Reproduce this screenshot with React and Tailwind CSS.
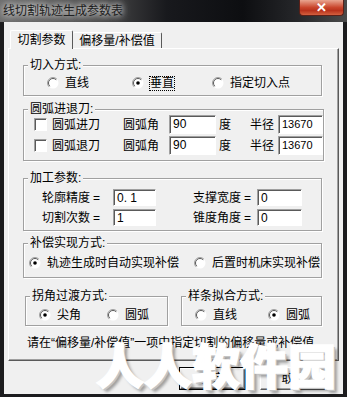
import React from 'react';

// Windows classic-style dialog: 线切割轨迹生成参数表

function Radio({ checked }) {
  return (
    <svg width="12" height="12" viewBox="0 0 12 12" className="shrink-0">
      <circle cx="6" cy="6" r="5.5" fill="#fff" />
      <path d="M9.9 2.1A5.5 5.5 0 0 0 2.1 9.9" fill="none" stroke="#a0a0a0" />
      <path d="M9.2 2.8A4.5 4.5 0 0 0 2.8 9.2" fill="none" stroke="#5a5a5a" />
      {checked && <circle cx="6" cy="6" r="1.8" fill="#000" />}
    </svg>
  );
}

function Option({ checked, label, className = '', focus = false }) {
  return (
    <div className={`flex items-center gap-[6px] h-[14px] ${className}`}>
      <Radio checked={checked} />
      <span className={focus ? 'leading-[13px] outline outline-1 outline-dotted outline-black' : 'leading-[14px]'}>{label}</span>
    </div>
  );
}

function Check() {
  return (
    <div className="w-[13px] h-[13px] shrink-0 bg-white border border-t-[#a0a0a0] border-l-[#a0a0a0] border-r-white border-b-white shadow-[inset_1px_1px_0_#5a5a5a]" />
  );
}

function Field({ value, className = '' }) {
  return (
    <div className={`shrink-0 bg-white border border-t-[#a0a0a0] border-l-[#a0a0a0] border-r-white border-b-white shadow-[inset_1px_1px_0_#5a5a5a] pl-[3px] pt-[1px] leading-[14px] ${className}`}>
      {value}
    </div>
  );
}

function Group({ title, className = '', children }) {
  return (
    <fieldset className={`border border-[#a0a0a0] shadow-[inset_1px_1px_0_#fff,1px_1px_0_#fff] ${className}`}>
      <legend className="ml-[4px] px-[2px] leading-[12px] bg-[#f0f0f0]">{title}</legend>
      {children}
    </fieldset>
  );
}

function Button({ label, primary }) {
  return (
    <div className={primary ? 'border border-black' : ''}>
      <div
        className={`flex items-center justify-center bg-[#f0f0f0] border border-t-white border-l-white border-r-[#5a5a5a] border-b-[#5a5a5a] shadow-[inset_-1px_-1px_0_#a0a0a0] ${primary ? 'w-[65px] h-[21px]' : 'w-[67px] h-[23px]'}`}
      >
        {label}
      </div>
    </div>
  );
}

export default function App() {
  return (
    <div className="relative w-[347px] h-[397px] overflow-hidden flex flex-col bg-[#1c1c1e] text-[12px] text-black font-['Liberation_Sans','Noto_Sans_CJK_SC',sans-serif]">
      {/* Title bar */}
      <div className="h-[22px] flex items-start bg-[linear-gradient(to_right,#6e6e6e_0%,#4c4c4c_28%,#18191d_48%,#0d0e11_70%,#26272a_86%,#4a4a4a_100%)]">
        <div className="pl-[3px] pt-[3px] leading-[16px] text-[#202020] [text-shadow:0_0_6px_#fff,0_0_10px_#d8d8d8]">
          线切割轨迹生成参数表
        </div>
        <div className="ml-auto mr-[3px] w-[45px] h-[16px] rounded-b-[4px] border border-t-0 border-[#5a2018] bg-[linear-gradient(to_bottom,#e9a590,#c9452c_50%,#b8321c_70%,#d2603f)] flex items-center justify-center text-white font-bold text-[13px] leading-none">
          ✕
        </div>
      </div>

      {/* Client */}
      <div className="flex-1 mx-[4px] mb-[3px] bg-[#f0f0f0] px-[4px] flex flex-col">
        {/* Tabs */}
        <div className="h-[26px] pt-[8px] flex items-end">
          <div className="relative z-10 -mb-[1px] h-[19px] w-[63px] ml-[2px] bg-[#f0f0f0] border-t border-l border-t-white border-l-white border-r border-r-[#5a5a5a] rounded-t-[2px] flex items-center justify-center leading-[14px] pb-[1px]">
            切割参数
          </div>
          <div className="h-[16px] w-[89px] bg-[#f0f0f0] border-t border-t-white border-r border-r-[#5a5a5a] rounded-t-[2px] flex items-center justify-center leading-[14px]">
            偏移量/补偿值
          </div>
        </div>

        {/* Tab page */}
        <div className="h-[313px] border border-t-white border-l-white border-r-[#5a5a5a] border-b-[#5a5a5a] shadow-[inset_-1px_-1px_0_#a0a0a0] flex flex-col">
          <Group title="切入方式:" className="mt-[10px] ml-[14px] w-[299px] pt-[5px] pb-[5px]">
            <div className="flex">
              <Option label="直线" className="ml-[23px]" />
              <Option checked focus label="垂直" className="ml-[43px]" />
              <Option label="指定切入点" className="ml-[38px]" />
            </div>
          </Group>

          <Group title="圆弧进退刀:" className="mt-[7px] ml-[14px] w-[299px] pb-[5px]">
            <div className="flex flex-col gap-[2px]">
              {['圆弧进刀', '圆弧退刀'].map((t) => (
                <div key={t} className="flex items-center h-[19px]">
                  <div className="ml-[10px]">
                    <Check />
                  </div>
                  <span className="ml-[5px] w-[48px] leading-[14px]">{t}</span>
                  <span className="ml-[23px] w-[36px] leading-[14px]">圆弧角</span>
                  <Field value="90" className="ml-[10px] w-[47px] h-[19px]" />
                  <span className="ml-[3px] w-[12px] leading-[14px]">度</span>
                  <span className="ml-[19px] w-[24px] leading-[14px]">半径</span>
                  <Field value="13670" className="ml-[4px] w-[45px] h-[19px] text-[11px]" />
                </div>
              ))}
            </div>
          </Group>

          <Group title="加工参数:" className="mt-[11px] ml-[14px] w-[299px] pt-[5px] pb-[4px]">
            <div className="flex flex-col gap-[3px]">
              {[
                ['轮廓精度', '0. 1', '支撑宽度', '0'],
                ['切割次数', '1', '锥度角度', '0'],
              ].map(([a, av, b, bv]) => (
                <div key={a} className="flex items-center h-[17px]">
                  <span className="ml-[18px] w-[48px] leading-[14px]">{a}</span>
                  <span className="ml-[3px] w-[8px] leading-[14px]">=</span>
                  <Field value={av} className="ml-[12px] w-[43px] h-[17px] pt-0" />
                  <span className="ml-[37px] w-[48px] leading-[14px]">{b}</span>
                  <span className="ml-[3px] w-[8px] leading-[14px]">=</span>
                  <Field value={bv} className="ml-[5px] w-[45px] h-[17px] pt-0" />
                </div>
              ))}
            </div>
          </Group>

          <Group title="补偿实现方式:" className="mt-[6px] ml-[14px] w-[299px] pt-[7px] pb-[7px]">
            <div className="flex">
              <Option checked label="轨迹生成时自动实现补偿" className="ml-[5px]" />
              <Option label="后置时机床实现补偿" className="ml-[15px]" />
            </div>
          </Group>

          <div className="flex mt-[12px]">
            <Group title="拐角过渡方式:" className="ml-[16px] w-[143px] pt-[6px] pb-[3px]">
              <div className="flex">
                <Option checked label="尖角" className="ml-[13px]" />
                <Option label="圆弧" className="ml-[26px]" />
              </div>
            </Group>
            <Group title="样条拟合方式:" className="ml-[13px] w-[141px] pt-[6px] pb-[3px]">
              <div className="flex">
                <Option label="直线" className="ml-[13px]" />
                <Option checked label="圆弧" className="ml-[31px]" />
              </div>
            </Group>
          </div>

          <div className="mt-[10px] ml-[18px] leading-[14px]">
            请在“偏移量/补偿值”一项中指定切割的偏移量或补偿值
          </div>
        </div>

        {/* Buttons */}
        <div className="flex mt-[6px] ml-[171px] gap-[14px]">
          <Button primary label="确定" />
          <Button label="取消" />
        </div>
      </div>

      {/* Watermark */}
      <div className="absolute left-[96px] top-[339px] text-[48px] leading-none font-black text-white [-webkit-text-stroke:1.5px_#fff] [text-shadow:2px_2px_0_#c4c4c4,4px_4px_3px_rgba(0,0,0,0.35)] font-['Noto_Sans_CJK_SC',sans-serif] pointer-events-none">
        人人软件园
      </div>
    </div>
  );
}
